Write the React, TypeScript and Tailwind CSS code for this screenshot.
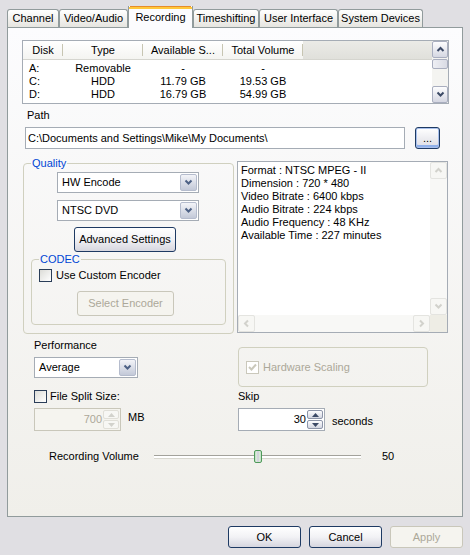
import React from 'react';

const tabs = [
  { label: 'Channel', w: 'w-[52px]' },
  { label: 'Video/Audio', w: 'w-[69px]' },
  { label: 'Recording', w: 'w-[65px]', active: true },
  { label: 'Timeshifting', w: 'w-[66px]' },
  { label: 'User Interface', w: 'w-[79px]' },
  { label: 'System Devices', w: 'w-[85px]' },
];

const disks = [
  { disk: 'A:', type: 'Removable', avail: '-', total: '-' },
  { disk: 'C:', type: 'HDD', avail: '11.79 GB', total: '19.53 GB' },
  { disk: 'D:', type: 'HDD', avail: '16.79 GB', total: '54.99 GB' },
];

const info = [
  'Format : NTSC MPEG - II',
  'Dimension : 720 * 480',
  'Video Bitrate : 6400 kbps',
  'Audio Bitrate : 224 kbps',
  'Audio Frequency : 48 KHz',
  'Available Time : 227 minutes',
];

const Chevron = ({ dir = 'down', color = '#4d6185' }: { dir?: 'down' | 'up' | 'left' | 'right'; color?: string }) => {
  const pts: Record<string, string> = {
    down: '1.5,2.5 4.5,5.5 7.5,2.5',
    up: '1.5,6 4.5,3 7.5,6',
    left: '6,1.5 3,4.5 6,7.5',
    right: '3,1.5 6,4.5 3,7.5',
  };
  return (
    <svg width="9" height="9" viewBox="0 0 9 9">
      <polyline points={pts[dir]} fill="none" stroke={color} strokeWidth="2" />
    </svg>
  );
};

const ScrollBtn = ({ dir, disabled }: { dir: 'down' | 'up' | 'left' | 'right'; disabled?: boolean }) => (
  <div
    className={
      disabled
        ? 'w-[17px] h-[17px] flex items-center justify-center rounded-[2px] border border-[#e4e4e0] bg-[#f7f7f4]'
        : 'w-[16px] h-[17px] flex items-center justify-center rounded-[2px] border border-[#a9aebf] bg-gradient-to-b from-[#fdfdfe] to-[#d5d7e2]'
    }
  >
    <Chevron dir={dir} color={disabled ? '#d2d2cc' : '#3c4a66'} />
  </div>
);

const Combo = ({ value, w }: { value: string; w: string }) => (
  <div className={`${w} h-[21px] flex items-center border border-[#a5acb5] bg-white p-[1px]`}>
    <span className="flex-1 pl-[3px] whitespace-nowrap">{value}</span>
    <div className="w-[17px] h-full flex items-center justify-center rounded-[2px] border border-[#b5bccd] bg-gradient-to-b from-[#f3f4f8] to-[#c3c9d8]">
      <Chevron />
    </div>
  </div>
);

const Button = ({ label, w, h = 'h-[22px]', disabled, focus }: { label: string; w: string; h?: string; disabled?: boolean; focus?: boolean }) => (
  <div
    className={`${w} ${h} flex items-center justify-center rounded-[3px] border whitespace-nowrap ${
      disabled
        ? 'border-[#c9c7ba] bg-[#f5f4ef] text-[#aca899]'
        : focus
        ? 'border-[#1e3a63] bg-gradient-to-b from-white to-[#dcdce4] shadow-[inset_0_0_0_1px_#a8c0ec,inset_0_-2px_0_1px_#8fb0ea]'
        : 'border-[#1e3a63] bg-gradient-to-b from-white via-[#f2f2f5] to-[#d6d6df]'
    }`}
  >
    {label}
  </div>
);

const Checkbox = ({ checked, disabled }: { checked?: boolean; disabled?: boolean }) => (
  <div
    className={`w-[13px] h-[13px] shrink-0 flex items-center justify-center border ${
      disabled ? 'border-[#cac8bb] bg-white' : 'border-[#2a3d58] bg-gradient-to-br from-[#dcdcd7] to-white'
    }`}
  >
    {checked && (
      <svg width="9" height="9" viewBox="0 0 9 9">
        <polyline points="1,4 3.5,6.5 8,1.5" fill="none" stroke={disabled ? '#cac8bb' : '#21a121'} strokeWidth="2" />
      </svg>
    )}
  </div>
);

const Spin = ({ value, disabled }: { value: string; disabled?: boolean }) => (
  <div className={`w-[87px] h-[23px] flex items-center border p-[1px] ${disabled ? 'border-[#c9c7ba] bg-[#f5f4ef]' : 'border-[#a5acb5] bg-white'}`}>
    <span className={`flex-1 text-right pr-[1px] ${disabled ? 'text-[#aca899]' : ''}`}>{value}</span>
    <div className="w-[16px] h-full flex flex-col gap-[1px]">
      {['up', 'down'].map((d) => (
        <div
          key={d}
          className={`flex-1 flex items-center justify-center rounded-[2px] border ${
            disabled ? 'border-[#e0dfd8] bg-[#f7f7f4]' : 'border-[#8d95a8] bg-gradient-to-b from-[#fdfdfe] to-[#d3d6e1]'
          }`}
        >
          <svg width="7" height="4" viewBox="0 0 7 4">
            <polygon points={d === 'up' ? '0,4 3.5,0 7,4' : '0,0 3.5,4 7,0'} fill={disabled ? '#d2d2cc' : '#3c4a66'} />
          </svg>
        </div>
      ))}
    </div>
  </div>
);

export default function App() {
  return (
    <div className="w-[470px] h-[555px] bg-[#e0dfe3] text-[11px] leading-[13px] text-black font-['Liberation_Sans',Arial,sans-serif] flex flex-col overflow-hidden">
      {/* tabs */}
      <div className="flex items-end pl-[7px] pt-[6px] h-[27px]">
        {tabs.map((t) =>
          t.active ? (
            <div
              key={t.label}
              className={`${t.w} h-[22px] -mb-[1px] relative z-10 flex flex-col border-x border-[#919b9c] bg-[#fcfcfe]`}
            >
              <div className="h-[1px] bg-[#e68b2c] mx-[1px]" />
              <div className="h-[2px] bg-[#ffc83c]" />
              <div className="flex-1 flex items-center justify-center pb-[3px] whitespace-nowrap">{t.label}</div>
            </div>
          ) : (
            <div
              key={t.label}
              className={`${t.w} h-[18px] flex items-center justify-center rounded-t-[3px] border border-b-0 border-[#919b9c] bg-gradient-to-b from-white to-[#e6e5e0] whitespace-nowrap`}
            >
              {t.label}
            </div>
          )
        )}
      </div>

      {/* panel */}
      <div className="mx-[7px] w-[456px] h-[490px] border border-[#919b9c] bg-gradient-to-b from-[#fcfcfe] to-[#f0efea] flex flex-col">
        {/* list view */}
        <div className="ml-[14px] mt-[12px] w-[427px] h-[64px] border border-[#a5acb5] bg-white flex overflow-hidden">
          <div className="flex-1 flex flex-col">
            <div className="h-[19px] flex border-b border-[#d5d5cf]">
              {[
                ['Disk', 'w-[40px]'],
                ['Type', 'w-[80px]'],
                ['Available S...', 'w-[80px]'],
                ['Total Volume', 'w-[80px]'],
              ].map(([h, w]) => (
                <div key={h} className={`${w} flex items-center justify-center bg-gradient-to-b from-white to-[#f4f4f1] relative whitespace-nowrap`}>
                  {h}
                  <div className="absolute right-0 top-[3px] bottom-[3px] w-[1px] bg-[#c7c5b2]" />
                </div>
              ))}
              <div className="flex-1 bg-gradient-to-b from-[#ebebe7] to-[#e0e0db]" />
            </div>
            <div className="pt-[2px]">
              {disks.map((d) => (
                <div key={d.disk} className="h-[13px] flex items-center">
                  <div className="w-[40px] pl-[6px]">{d.disk}</div>
                  <div className="w-[80px] text-center">{d.type}</div>
                  <div className="w-[80px] text-center">{d.avail}</div>
                  <div className="w-[80px] text-center">{d.total}</div>
                </div>
              ))}
            </div>
          </div>
          <div className="w-[16px] flex flex-col bg-[#f4f4f1]">
            <ScrollBtn dir="up" />
            <div className="mt-[1px] h-[10px] rounded-[2px] border border-[#a9aebf] bg-gradient-to-r from-[#eeeff4] to-[#d9dbe4]" />
            <div className="flex-1" />
            <ScrollBtn dir="down" />
          </div>
        </div>

        {/* path */}
        <div className="ml-[19px] mt-[5px]">Path</div>
        <div className="mt-[5px] ml-[17px] flex items-center">
          <div className="w-[380px] h-[22px] border border-[#a5acb5] bg-white flex items-center pl-[2px] whitespace-nowrap">
            C:\Documents and Settings\Mike\My Documents\
          </div>
          <div className="ml-[10px]">
            <Button label="..." w="w-[25px]" focus />
          </div>
        </div>

        {/* quality + info */}
        <div className="mt-[8px] flex items-start">
          <fieldset className="ml-[15px] w-[211px] h-[177px] border border-[#d0d0bf] rounded-[4px] p-0 m-0 min-w-0">
            <legend className="ml-[7px] px-[1px] leading-[12px] text-[#0046d5]">Quality</legend>
            <div className="flex flex-col">
              <div className="ml-[33px] mt-[3px]">
                <Combo value="HW Encode" w="w-[142px]" />
              </div>
              <div className="ml-[33px] mt-[7px]">
                <Combo value="NTSC DVD" w="w-[142px]" />
              </div>
              <div className="ml-[50px] mt-[6px]">
                <Button label="Advanced Settings" w="w-[102px]" h="h-[25px]" />
              </div>
              <fieldset className="ml-[7px] mt-[1px] w-[195px] h-[72px] border border-[#d0d0bf] rounded-[4px] p-0 m-0 min-w-0">
                <legend className="ml-[7px] px-[1px] leading-[12px] text-[#0046d5]">CODEC</legend>
                <div className="ml-[7px] mt-[4px] flex items-center gap-[4px]">
                  <Checkbox />
                  Use Custom Encoder
                </div>
                <div className="ml-[45px] mt-[9px]">
                  <Button label="Select Encoder" w="w-[97px]" h="h-[25px]" disabled />
                </div>
              </fieldset>
            </div>
          </fieldset>

          <div className="ml-[3px] mt-[4px] w-[211px] h-[172px] border border-[#a5acb5] bg-white flex flex-col">
            <div className="flex-1 flex">
              <div className="flex-1 pl-[3px] pt-[2px]">
                {info.map((l) => (
                  <div key={l} className="whitespace-nowrap">{l}</div>
                ))}
              </div>
              <div className="w-[17px] flex flex-col bg-[#f8f8f6]">
                <ScrollBtn dir="up" disabled />
                <div className="flex-1" />
                <ScrollBtn dir="down" disabled />
              </div>
            </div>
            <div className="h-[17px] flex bg-[#f8f8f6]">
              <ScrollBtn dir="left" disabled />
              <div className="flex-1" />
              <ScrollBtn dir="right" disabled />
              <div className="w-[17px] bg-[#eeede5]" />
            </div>
          </div>
        </div>

        {/* performance / hw scaling / split / skip */}
        <div className="flex">
          <div className="ml-[26px] w-[204px] flex flex-col">
            <div className="mt-[5px]">Performance</div>
            <div className="mt-[5px]">
              <Combo value="Average" w="w-[104px]" />
            </div>
            <div className="mt-[12px] flex items-center gap-[3px]">
              <Checkbox />
              File Split Size:
            </div>
            <div className="mt-[5px] flex items-start">
              <Spin value="700" disabled />
              <span className="ml-[7px] mt-[3px]">MB</span>
            </div>
          </div>
          <div className="flex flex-col">
            <div className="mt-[13px] w-[190px] h-[40px] border border-[#d0d0bf] rounded-[4px] flex items-center pl-[7px] gap-[4px] text-[#aca899]">
              <Checkbox checked disabled />
              Hardware Scaling
            </div>
            <div className="mt-[3px]">Skip</div>
            <div className="mt-[5px] flex items-start">
              <Spin value="30" />
              <span className="ml-[7px] mt-[7px]">seconds</span>
            </div>
          </div>
        </div>

        {/* recording volume */}
        <div className="mt-[18px] ml-[41px] h-[14px] flex items-center">
          <div className="w-[105px] whitespace-nowrap">Recording Volume</div>
          <div className="w-[207px] flex items-center">
            <div className="flex-1 h-[3px] border-t border-[#a3a29b] bg-white shadow-[0_1px_0_#d8d7cf]" />
            <div className="w-[8px] h-[13px] rounded-[2px] border border-[#4e9a5a] bg-gradient-to-r from-[#bfe0c2] via-[#f2f2f2] to-[#bfe0c2] flex justify-center">
              <div className="w-[2px] h-full bg-[#d4d4dc]" />
            </div>
            <div className="flex-1 h-[3px] border-t border-[#a3a29b] bg-white shadow-[0_1px_0_#d8d7cf]" />
          </div>
          <div className="ml-[21px]">50</div>
        </div>
      </div>

      {/* dialog buttons */}
      <div className="mt-[9px] flex justify-end gap-[8px] pr-[7px]">
        <Button label="OK" w="w-[73px]" />
        <Button label="Cancel" w="w-[73px]" />
        <Button label="Apply" w="w-[73px]" disabled />
      </div>
    </div>
  );
}
